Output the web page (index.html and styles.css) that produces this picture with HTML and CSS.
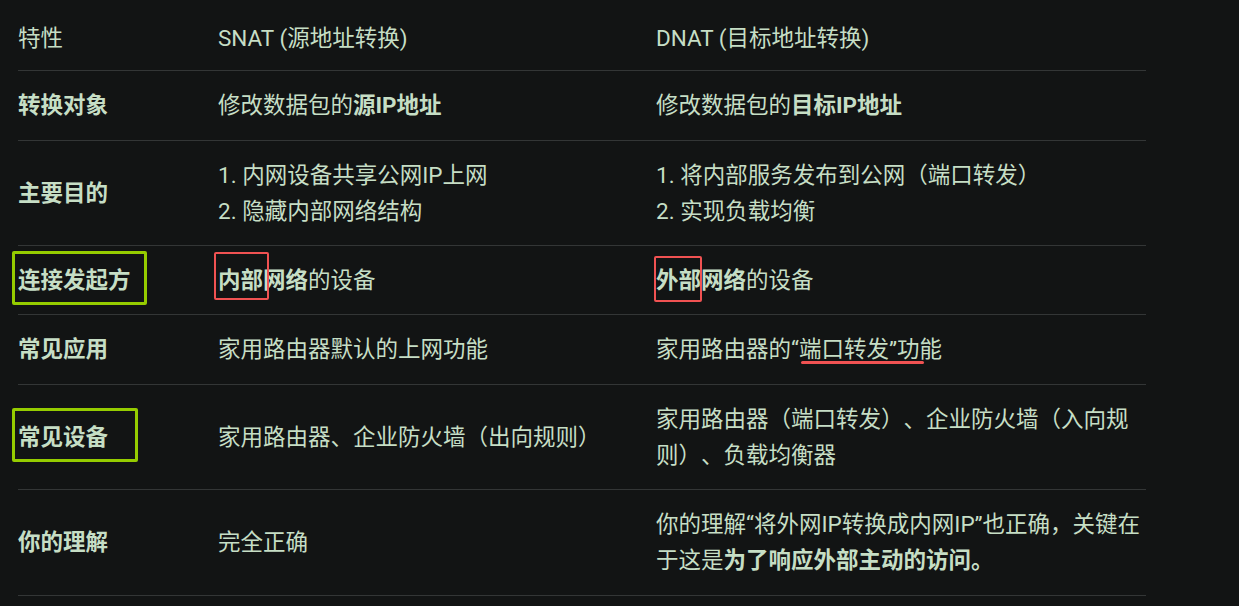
FILE: index.html
```html
<!DOCTYPE html>
<html lang="zh-CN">
<head>
<meta charset="utf-8">
<title>SNAT vs DNAT</title>
<link rel="stylesheet" href="styles.css">
</head>
<body>
<div class="page">
  <table class="cmp">
    <colgroup>
      <col class="c1"><col class="c2"><col class="c3">
    </colgroup>
    <thead>
      <tr><th>特性</th><th>SNAT (源地址转换)</th><th>DNAT (目标地址转换)</th></tr>
    </thead>
    <tbody>
      <tr>
        <td><b>转换对象</b></td>
        <td>修改数据包的<b>源IP地址</b></td>
        <td>修改数据包的<b>目标IP地址</b></td>
      </tr>
      <tr>
        <td><b>主要目的</b></td>
        <td>1. 内网设备共享公网IP上网<br>2. 隐藏内部网络结构</td>
        <td>1. 将内部服务发布到公网（端口转发）<br>2. 实现负载均衡</td>
      </tr>
      <tr>
        <td><span class="mark mark-green g1"><b>连接发起方</b></span></td>
        <td><span class="mark mark-red r1"><b>内部</b></span><b>网络</b>的设备</td>
        <td><span class="mark mark-red r2"><b>外部</b></span><b>网络</b>的设备</td>
      </tr>
      <tr>
        <td><b>常见应用</b></td>
        <td>家用路由器默认的上网功能</td>
        <td>家用路由器的<span class="mark mark-line">“端口转发”</span>功能</td>
      </tr>
      <tr>
        <td><span class="mark mark-green g2"><b>常见设备</b></span></td>
        <td>家用路由器、企业防火墙（出向规则）</td>
        <td>家用路由器（端口转发）、企业防火墙（入向规则）、负载均衡器</td>
      </tr>
      <tr>
        <td><b>你的理解</b></td>
        <td>完全正确</td>
        <td>你的理解“将外网IP转换成内网IP”也正确，关键在于这是<b>为了响应外部主动的访问。</b></td>
      </tr>
    </tbody>
  </table>
</div>
</body>
</html>
```

FILE: styles.css
```css
html, body {
  margin: 0;
  padding: 0;
  background: #121414;
}

.page {
  padding: 4px 0 0 18px;
  font-family: Roboto, "Noto Sans CJK SC", sans-serif;
  font-size: 22.5px;
  color: #c6dec5;
  text-spacing-trim: space-all;
}

.cmp {
  border-collapse: collapse;
  width: 1128px;
  table-layout: fixed;
}

.c1 { width: 200px; }
.c2 { width: 438px; }
.c3 { width: 490px; }

.cmp th,
.cmp td {
  text-align: left;
  vertical-align: middle;
  padding: 16px 0;
  line-height: 36.25px;
  font-weight: 400;
  border-bottom: 1px solid #333636;
}

.cmp th {
  padding: 16px 0 14px;
}

.cmp b {
  font-weight: 700;
}

.mark {
  position: relative;
  display: inline-block;
  vertical-align: top;
}

.mark::after {
  content: "";
  position: absolute;
  box-sizing: border-box;
}

.mark-green::after {
  border: 3px solid #95cc00;
  border-radius: 2px;
  left: -6px;
  top: -11px;
  height: 54px;
}

.g1::after { width: 135px; }
.g2::after { width: 126px; }

.mark-red::after {
  border: 2px solid #f05252;
  border-radius: 2px;
}

.r1::after {
  left: -4px;
  top: -10px;
  width: 55px;
  height: 48px;
}

.r2::after {
  left: -2px;
  top: -6px;
  width: 48px;
  height: 46px;
}

.mark-line::after {
  left: 10px;
  top: 30px;
  width: 123px;
  height: 3px;
  border-radius: 2px;
  background: #f05252;
}
```
